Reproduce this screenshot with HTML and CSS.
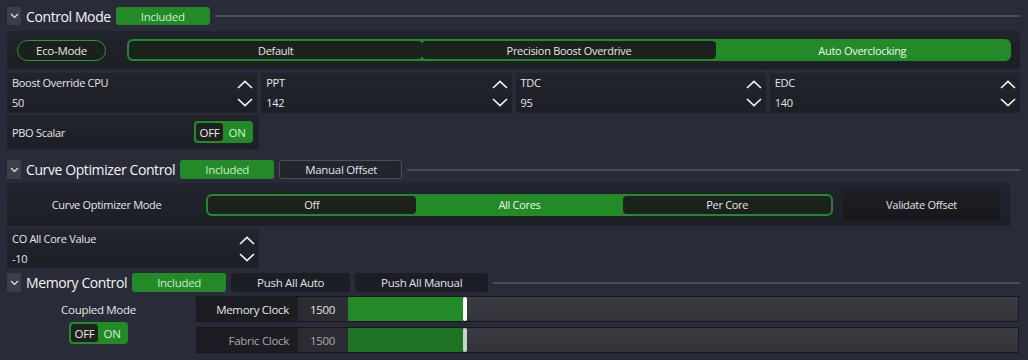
FILE: index.html
```html
<!DOCTYPE html>
<html>
  <head>
    <title>CPU Tuning</title>
    <link rel="stylesheet" href="styles.css">
  </head>
  <body>
    <div class="page">
      <!-- Control Mode -->
      <div class="section-head">
        <span class="collapse"><svg width="9" height="6" viewBox="0 0 9 6"><polyline points="1,1 4.5,4.5 8,1" /></svg></span>
        <span class="title">Control Mode</span>
        <span class="badge included">Included</span>
        <span class="rule"></span>
      </div>
      <div class="panel mode-row">
        <button class="pill">Eco-Mode</button>
        <div class="segmented">
          <span class="seg">Default</span>
          <span class="seg">Precision Boost Overdrive</span>
          <span class="seg active">Auto Overclocking</span>
        </div>
      </div>
      <div class="spin-grid">
        <div class="spin panel">
          <div class="spin-text"><label>Boost Override CPU</label><span>50</span></div>
          <div class="arrows">
            <svg width="16" height="9" viewBox="0 0 16 9"><polyline points="1,8 8,1.5 15,8" /></svg>
            <svg width="16" height="9" viewBox="0 0 16 9"><polyline points="1,1 8,7.5 15,1" /></svg>
          </div>
        </div>
        <div class="spin panel">
          <div class="spin-text"><label>PPT</label><span>142</span></div>
          <div class="arrows">
            <svg width="16" height="9" viewBox="0 0 16 9"><polyline points="1,8 8,1.5 15,8" /></svg>
            <svg width="16" height="9" viewBox="0 0 16 9"><polyline points="1,1 8,7.5 15,1" /></svg>
          </div>
        </div>
        <div class="spin panel">
          <div class="spin-text"><label>TDC</label><span>95</span></div>
          <div class="arrows">
            <svg width="16" height="9" viewBox="0 0 16 9"><polyline points="1,8 8,1.5 15,8" /></svg>
            <svg width="16" height="9" viewBox="0 0 16 9"><polyline points="1,1 8,7.5 15,1" /></svg>
          </div>
        </div>
        <div class="spin panel">
          <div class="spin-text"><label>EDC</label><span>140</span></div>
          <div class="arrows">
            <svg width="16" height="9" viewBox="0 0 16 9"><polyline points="1,8 8,1.5 15,8" /></svg>
            <svg width="16" height="9" viewBox="0 0 16 9"><polyline points="1,1 8,7.5 15,1" /></svg>
          </div>
        </div>
      </div>
      <div class="panel switch-row">
        <label>PBO Scalar</label>
        <div class="toggle"><span class="off">OFF</span><span class="on">ON</span></div>
      </div>

      <!-- Curve Optimizer -->
      <div class="section-head head-co">
        <span class="collapse"><svg width="9" height="6" viewBox="0 0 9 6"><polyline points="1,1 4.5,4.5 8,1" /></svg></span>
        <span class="title">Curve Optimizer Control</span>
        <span class="badge included">Included</span>
        <span class="badge outline">Manual Offset</span>
        <span class="rule"></span>
      </div>
      <div class="panel co-row">
        <label class="co-label">Curve Optimizer Mode</label>
        <div class="segmented co-seg">
          <span class="seg">Off</span>
          <span class="seg active">All Cores</span>
          <span class="seg">Per Core</span>
        </div>
        <button class="validate">Validate Offset</button>
      </div>
      <div class="spin panel single">
        <div class="spin-text"><label>CO All Core Value</label><span>-10</span></div>
        <div class="arrows">
          <svg width="16" height="9" viewBox="0 0 16 9"><polyline points="1,8 8,1.5 15,8" /></svg>
          <svg width="16" height="9" viewBox="0 0 16 9"><polyline points="1,1 8,7.5 15,1" /></svg>
        </div>
      </div>

      <!-- Memory -->
      <div class="section-head head-mem">
        <span class="collapse"><svg width="9" height="6" viewBox="0 0 9 6"><polyline points="1,1 4.5,4.5 8,1" /></svg></span>
        <span class="title">Memory Control</span>
        <span class="badge included">Included</span>
        <span class="badge dark">Push All Auto</span>
        <span class="badge dark">Push All Manual</span>
        <span class="rule"></span>
      </div>
      <div class="memory">
        <div class="coupled">
          <label>Coupled Mode</label>
          <div class="toggle"><span class="off">OFF</span><span class="on">ON</span></div>
        </div>
        <div class="sliders">
          <div class="slider">
            <span class="slider-name">Memory Clock</span>
            <span class="slider-value">1500</span>
            <div class="track"><span class="fill" style="width: 117px"></span><span class="handle"></span></div>
          </div>
          <div class="slider disabled">
            <span class="slider-name">Fabric Clock</span>
            <span class="slider-value">1500</span>
            <div class="track"><span class="fill" style="width: 117px"></span><span class="handle"></span></div>
          </div>
        </div>
      </div>
    </div>
  </body>
</html>
```

FILE: styles.css
```css
* {
  box-sizing: border-box;
}

body {
  margin: 0;
  background: #292c38;
  color: #e4e5e7;
  font-family: "Open Sans", "Noto Sans", sans-serif;
  font-size: 11px;
  letter-spacing: -0.3px;
}

button {
  font-family: inherit;
  font-size: inherit;
  letter-spacing: inherit;
  color: inherit;
  cursor: pointer;
}

.page {
  width: 1028px;
  padding: 7px 8px 0 7px;
}

/* Section headers */
.section-head {
  display: flex;
  align-items: center;
  gap: 5px;
  height: 18px;
}
.head-co {
  margin-top: 11px;
  height: 19px;
}
.head-mem {
  margin-top: 5px;
  height: 19px;
}

.collapse {
  width: 14px;
  height: 100%;
  background: #3c3f4a;
  display: flex;
  align-items: center;
  justify-content: center;
}
.collapse svg polyline {
  fill: none;
  stroke: #e8e8e8;
  stroke-width: 1.2;
}

.title {
  font-size: 14px;
  color: #f4f4f4;
  letter-spacing: -0.4px;
  white-space: nowrap;
}

.badge {
  height: 100%;
  padding: 0 23px;
  display: flex;
  align-items: center;
  justify-content: center;
  border-radius: 3px;
  white-space: nowrap;
  font-size: 11.5px;
}
.badge.included {
  min-width: 94px;
  background: #238a28;
  color: #cfe9cf;
}
.badge.outline {
  background: #22252e;
  border: 1px solid #4c4f58;
  color: #e0e1e4;
  padding: 0 24px 0 25px;
}
.badge.dark {
  background: #1c1e25;
  color: #e0e1e4;
  padding: 0 26px;
}

.rule {
  flex: 1;
  height: 2px;
  background: #4a4d57;
}

/* Panels */
.panel {
  background: linear-gradient(#22242d, #1d1f27);
}

.mode-row {
  margin-top: 6px;
  height: 38px;
  padding: 0 9px 0 10px;
  display: flex;
  align-items: center;
  gap: 21px;
}

.pill {
  width: 89px;
  height: 21px;
  border: 1.5px solid #2a9930;
  border-radius: 11px;
  background: #1b201d;
  color: #e6e6e6;
  padding: 0;
  font-size: 11.5px;
}

.segmented {
  flex: 1;
  height: 22px;
  padding: 2px;
  display: flex;
  background: #238a28;
  border-radius: 6px;
}
.seg {
  flex: 1;
  display: flex;
  align-items: center;
  justify-content: center;
  background: #1b211c;
  border-radius: 4px;
  color: #e6e6e6;
}
.seg.active {
  background: transparent;
  color: #eef6ee;
}

/* Spin boxes */
.spin-grid {
  margin-top: 4px;
  display: grid;
  grid-template-columns: repeat(4, 1fr);
  gap: 4px;
}
.spin {
  height: 40px;
  display: flex;
  justify-content: space-between;
  padding: 0 4px 0 5px;
}
.spin.single {
  margin-top: 3px;
  width: 252px;
  height: 39px;
}
.spin-text {
  display: flex;
  flex-direction: column;
  line-height: 20px;
}
.spin-text label {
  color: #e6e6e8;
}
.arrows {
  display: flex;
  flex-direction: column;
  justify-content: space-between;
  padding: 7px 0 6px;
}
.arrows polyline {
  fill: none;
  stroke: #f0f0f0;
  stroke-width: 1.7;
}

/* Toggle */
.switch-row {
  margin-top: 2px;
  width: 252px;
  height: 34px;
  display: flex;
  align-items: center;
  justify-content: space-between;
  padding: 0 6px 0 5px;
}
.toggle {
  width: 59px;
  height: 22px;
  padding: 2px;
  display: flex;
  background: #238a28;
  border-radius: 4px;
}
.toggle .off {
  width: 27px;
  background: #1d221f;
  border-radius: 3px;
  display: flex;
  align-items: center;
  justify-content: center;
  color: #ececec;
  font-size: 11.5px;
}
.toggle .on {
  flex: 1;
  display: flex;
  align-items: center;
  justify-content: center;
  color: #d6efd6;
  font-size: 11.5px;
}

/* Curve optimizer */
.co-row {
  margin-top: 4px;
  width: 1003px;
  height: 43px;
  display: flex;
  align-items: center;
  padding-right: 10px;
}
.co-label {
  width: 199px;
  text-align: center;
}
.co-seg {
  flex: none;
  width: 627px;
}
.validate {
  margin-left: 10px;
  width: 157px;
  height: 32px;
  border: none;
  background: linear-gradient(#1d1f25, #16181d);
  color: #e2e3e6;
  padding: 0;
}

/* Memory */
.memory {
  margin-top: 4px;
  display: flex;
  gap: 6px;
}
.coupled {
  width: 183px;
  display: flex;
  flex-direction: column;
  align-items: center;
  padding-top: 5px;
  gap: 3px;
}
.coupled label {
  line-height: 18px;
  font-size: 11.5px;
}
.sliders {
  flex: 1;
  display: flex;
  flex-direction: column;
  gap: 5px;
  padding-right: 1px;
}
.slider {
  height: 26px;
  display: flex;
  border: 1px solid #16181d;
  font-size: 11.5px;
}
.slider-name {
  width: 101px;
  background: #1b1d23;
  display: flex;
  align-items: center;
  justify-content: flex-end;
  padding-right: 9px;
}
.slider-value {
  width: 50px;
  background: #2b2d33;
  display: flex;
  align-items: center;
  padding-left: 12px;
}
.track {
  flex: 1;
  display: flex;
  background: linear-gradient(#3b3c42, #323338);
}
.fill {
  background: #238a28;
}
.handle {
  width: 4px;
  margin-left: -2px;
  background: #ffffff;
  border-radius: 2px;
}
.slider.disabled .slider-name,
.slider.disabled .slider-value {
  color: #a6a8ad;
}
.slider.disabled .fill {
  background: #1f7325;
}
.slider.disabled .handle {
  background: #c9d4c9;
}
```
